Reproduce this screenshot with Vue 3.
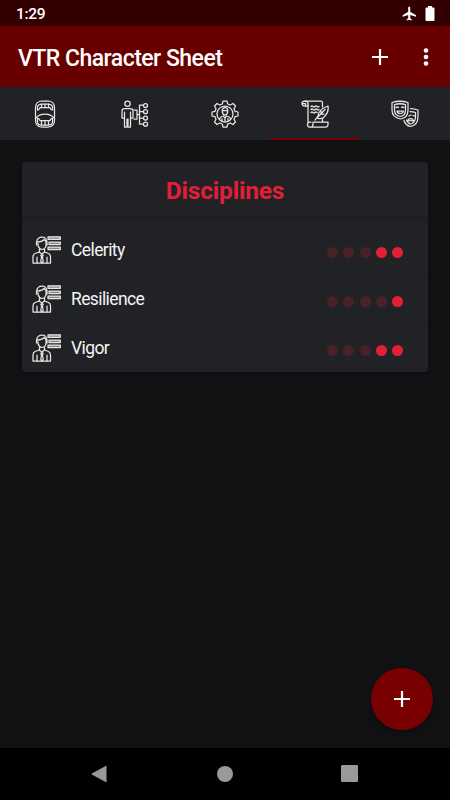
<template>
  <div class="screen">
    <div class="status-bar">
      <span class="clock">1:29</span>
      <svg class="plane" width="15" height="15" viewBox="0 0 16 16">
        <path d="M7.700 .8c.7 0 1.100.5 1.100 1.200v4l6.100 3.900v1.600L8.800 9.600v3.500l1.700 1.200v1.200l-2.800-.8-2.800.8v-1.200l1.700-1.200V9.600L.7 11.500V9.900L6.600 6V2c0-.7.4-1.200 1.100-1.200z" />
      </svg>
      <svg class="battery" width="10" height="15" viewBox="0 0 10 15">
        <path d="M3 0h4v1.500h1.500q1 0 1 1V14q0 1-1 1h-7q-1 0-1-1V2.500q0-1 1-1H3z" />
      </svg>
    </div>

    <header class="app-bar">
      <h1>VTR Character Sheet</h1>
      <button class="icon-button add">
        <svg width="16" height="16" viewBox="0 0 16 16"><path d="M8 0v16M0 8h16" /></svg>
      </button>
      <button class="icon-button more">
        <svg width="6" height="18" viewBox="0 0 6 18">
          <circle cx="3" cy="2.500" r="2.300" />
          <circle cx="3" cy="9" r="2.300" />
          <circle cx="3" cy="15.500" r="2.300" />
        </svg>
      </button>
    </header>

    <nav class="tabs">
      <button v-for="tab in tabs" :key="tab.name" class="tab" :class="{ active: tab.name === activeTab }"
        :aria-label="tab.name" @click="activeTab = tab.name">
        <svg class="line-icon" width="28" height="28" viewBox="0 0 28 28">
          <path v-for="(d, i) in tab.paths" :key="i" :d="d" />
        </svg>
      </button>
    </nav>

    <main class="content">
      <section class="card">
        <h2>Disciplines</h2>
        <ul>
          <li v-for="item in disciplines" :key="item.name">
            <svg class="line-icon" width="30" height="28" viewBox="0 0 30 28">
              <path v-for="(d, i) in personPaths" :key="i" :d="d" />
              <path class="bars" d="M16 .8h12.300v2.500H16zM17 6h11.300v2.500H17zM16 11h12.300v2.500H16z" />
            </svg>
            <span class="name">{{ item.name }}</span>
            <span class="dots">
              <i v-for="n in 5" :key="n" class="dot" :class="{ filled: n > 5 - item.level }"></i>
            </span>
          </li>
        </ul>
      </section>
      <button class="fab">
        <svg width="16" height="16" viewBox="0 0 16 16"><path d="M8 0v16M0 8h16" /></svg>
      </button>
    </main>

    <footer class="nav-bar">
      <svg width="16" height="18" viewBox="0 0 16 18"><path d="M15.500 .5v17L.8 9.500q-.8-.5 0-1z" /></svg>
      <svg class="home" width="16" height="16" viewBox="0 0 16 16"><circle cx="8" cy="8" r="8" /></svg>
      <svg width="17" height="17" viewBox="0 0 17 17"><rect width="17" height="17" rx="1.200" /></svg>
    </footer>
  </div>
</template>

<script setup>
import { ref } from 'vue';

const activeTab = ref('disciplines');

const tabs = [
  {
    name: 'vampire',
    paths: [
      'M10.500 1h7q6 .5 6 7v12q0 6.500-6 7h-7q-6-.5-6-7V8q0-6.500 6-7z',
      'M6.500 10V6.500q1-2.500 4-2.500h7q3 0 4 2.500V10q-2 0-2.500-2.500H9Q8.500 10 6.500 10z',
      'M10.500 4v3.500M14 4v3.500M17.500 4v3.500',
      'M4.800 18Q8 14 14 14t9.200 4',
      'M6.500 18q1.500 0 2.500 2.500h10q1-2.500 2.500-2.500v5q-1 2-4 2h-7q-3 0-4-2z',
      'M10.500 20.500V25M14 20.500V25M17.500 20.500V25'
    ]
  },
  {
    name: 'attributes',
    paths: [
      'M6.500 1a2.700 2.700 0 1 1 0 5.400a2.700 2.700 0 1 1 0-5.400z',
      'M3.500 8.500h6q2.500 0 2.500 2.500v7H9.500v9H7v-8H6v8H3.500v-9H1v-7q0-2.500 2.500-2.500z',
      'M3.500 12v6M9.500 12v6M13 10h3v9h-3M16 14.500h2.500',
      'M22.500 5h-4v19h4M18.500 11.500h4M18.500 18h4',
      'M22.500 5.500a2 2 0 1 0 4 0a2 2 0 1 0-4 0z',
      'M22.500 11.700a2 2 0 1 0 4 0a2 2 0 1 0-4 0z',
      'M22.500 18a2 2 0 1 0 4 0a2 2 0 1 0-4 0z',
      'M22.500 24.200a2 2 0 1 0 4 0a2 2 0 1 0-4 0z'
    ]
  },
  {
    name: 'skills',
    paths: [
      'M12 1h4l.7 3 2.500 1L22 3.500 24.500 6 23 8.800l1 2.500 3 .7v4l-3 .7-1 2.500 1.500 2.800-2.500 2.500-2.800-1.500-2.500 1-.7 3h-4l-.7-3-2.500-1L6 24.500 3.500 22 5 19.200l-1-2.500-3-.7v-4l3-.7 1-2.500L3.500 6 6 3.500 8.800 5l2.500-1z',
      'M14 6a8 8 0 1 1 0 16a8 8 0 1 1 0-16z',
      'M11.300 10.500q0-3 2.700-3t2.700 3v1.500q-.7 3-2.700 3t-2.700-3zM11.500 10.500h5',
      'M8.500 19.500q0-2.500 4-3.500l1.500 2 1.500-2q4 1 4 3.500M14 18v3.500M11 18.500V21M17 18.500V21'
    ]
  },
  {
    name: 'disciplines',
    paths: [
      'M4 1h15.500q2 0 2 2v4M21.500 18.500V22',
      'M4 1Q1 1 1 3.500T4 6h3V3.500Q7 1 4 1zM1.500 3.500h3V6',
      'M7 5v17M10 22H8.500q-2 0-2 2.500t2 2.500h16q2.500 0 2.500-2.500V22H12v2.500q0 2.500-2.500 2.500',
      'M10 6.500q1-1 2 0t2 0 2 0 2 0M10 9.500q1-1 2 0t2 0 2 0 2 0M10 12.500q1-1 2 0t2 0 2 0',
      'M14 20l3-4q0-6 10-10 1 6-3 10-2 3.500-7 2.500M16 18l8-8.500M20 13.500V11M20 14h3'
    ]
  },
  {
    name: 'merits',
    paths: [
      'M1 2.500q8-2.500 16 0V10q0 8-7.500 9Q1 17.500 1 10z',
      'M3.500 4.500q5.500-1.500 11 0V10q0 5.500-5 6.500-6-1-6-6.500zM5 7.500q1.200-1 2.500 0M10.500 7.500q1.300-1 2.500 0M6 11h6.500q-.5 2.500-3.200 2.500T6 11z',
      'M19.500 8.500q3.500 0 7.500 1.500v7.500q-.5 8-7.500 9-5-1-6.500-6',
      'M19 11.500q3 0 5.500 1V17.500q-.5 5.500-5 6.500-2.500-.5-4-4M18 16l2-1M22 15.500l1.500 .5M16.500 21q.5-2.500 3-2.500t3 2.500q-3-.7-6 0z'
    ]
  }
];

// bust with tie
const personPaths = [
  'M6 7.500v2q1 3.500 4 4 3.500-.5 4-4v-3M4.500 9V6q1-5 5.500-5t5 5v3M5 6q5 0 7-2.500l3 3',
  'M7.500 13v3L3 17.500q-2 1-2 3.500v6h17.500v-6q0-2.500-2-3.500L12.500 16v-3',
  'M7 16l3 2 2.500-2M10 18l-1.200 1.500.8 1-.8 5L10 27l1.200-1.500-.8-5 .8-1zM5 21v6M15 21v6'
];

const disciplines = [
  { name: 'Celerity', level: 2 },
  { name: 'Resilience', level: 1 },
  { name: 'Vigor', level: 2 }
];
</script>

<style>
body {
  margin: 0;
  background: #121214;
}
</style>

<style scoped>
.screen {
  width: 450px;
  height: 800px;
  display: flex;
  flex-direction: column;
  overflow: hidden;
  background: #121214;
  color: #fff;
  font-family: Roboto, sans-serif;
}

button {
  display: flex;
  align-items: center;
  justify-content: center;
  padding: 0;
  border: none;
  background: none;
  color: inherit;
}

.status-bar {
  height: 26px;
  display: flex;
  align-items: center;
  box-sizing: border-box;
  padding: 0 15px 0 16px;
  background: #320000;
}

.clock {
  flex: 1;
  padding-top: 2px;
  font-size: 15.5px;
  font-weight: 500;
  letter-spacing: -0.3px;
}

.status-bar svg {
  fill: #fff;
}

.battery {
  margin-left: 8px;
}

.app-bar {
  height: 61px;
  display: flex;
  align-items: center;
  box-sizing: border-box;
  padding: 0 21px 0 18px;
  background: #690000;
}

.app-bar h1 {
  flex: 1;
  margin: 5px 0 0;
  font-size: 23px;
  line-height: 28px;
  font-weight: 500;
  letter-spacing: -0.52px;
  white-space: nowrap;
}

.add svg,
.fab svg {
  stroke: #fff;
  stroke-width: 2.2;
}

.more {
  margin-left: 35px;
}

.more svg {
  fill: #fff;
}

.tabs {
  height: 53px;
  display: grid;
  grid-template-columns: repeat(5, 1fr);
  background: #212226;
}

.tab {
  box-sizing: border-box;
  border-top: 2px solid transparent;
  border-bottom: 2px solid transparent;
}

.tab.active {
  border-bottom-color: #780000;
}

.line-icon {
  flex: none;
  fill: none;
  stroke: #e6e6e2;
  stroke-width: 1.25;
  stroke-linecap: round;
  stroke-linejoin: round;
}

.tab .line-icon {
  margin-right: 1px;
}

.bars {
  fill: #85868a;
}

.content {
  flex: 1;
  display: flex;
  flex-direction: column;
  justify-content: space-between;
  padding: 22px 17px 18px 22px;
}

.card {
  width: 406px;
  height: 210px;
  border-radius: 3px;
  background: #212226;
  box-shadow: 0 1px 4px rgba(0, 0, 0, 0.4);
}

.card h2 {
  height: 57px;
  margin: 0;
  box-sizing: border-box;
  border-bottom: 3px solid #1e1f22;
  font-size: 24.5px;
  line-height: 57px;
  font-weight: 700;
  letter-spacing: -0.2px;
  text-align: center;
  color: #e21f37;
}

.card ul {
  margin: 0;
  padding: 7px 0 0;
  list-style: none;
}

.card li {
  height: 49px;
  display: flex;
  align-items: center;
  box-sizing: border-box;
  padding: 0 25px 0 10px;
  border-bottom: 1px solid #1e1f22;
}

.card li:last-child {
  border-bottom-color: transparent;
}

.card .line-icon {
  margin-top: -1px;
}

.name {
  flex: 1;
  margin-left: 9px;
  font-size: 17.5px;
  letter-spacing: -0.6px;
  color: #f4f4f4;
}

.dots {
  display: flex;
  gap: 5.2px;
  margin-top: 5px;
}

.dot {
  width: 11px;
  height: 11px;
  border-radius: 50%;
  background: #482129;
}

.dot.filled {
  background: #e21f37;
}

.fab {
  width: 62px;
  height: 62px;
  align-self: flex-end;
  border-radius: 50%;
  background: #780000;
  box-shadow: 0 3px 8px rgba(0, 0, 0, 0.35);
}

.nav-bar {
  height: 52px;
  display: flex;
  align-items: center;
  justify-content: space-between;
  box-sizing: border-box;
  padding: 0 92px 1px 91px;
  background: #000;
}

.nav-bar svg {
  fill: #999;
}

.nav-bar .home {
  margin-left: 1px;
}
</style>
